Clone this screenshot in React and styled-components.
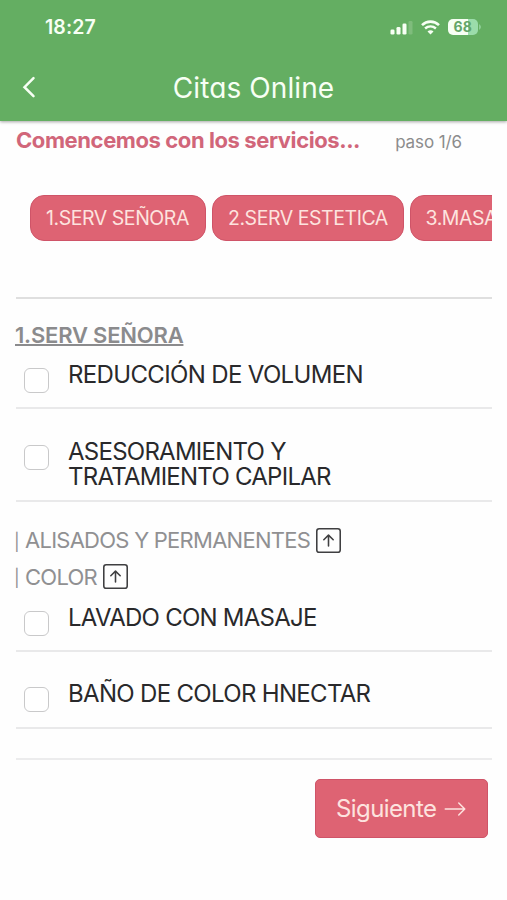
import React from "react";
import styled, { createGlobalStyle } from "styled-components";
import { BsArrowRight, BsArrowUpSquare } from "react-icons/bs";

const GlobalStyle = createGlobalStyle`
  * {
    box-sizing: border-box;
  }
  body {
    margin: 0;
    background: #fefefe;
    font-family: Inter, "Liberation Sans", sans-serif;
  }
`;

const Screen = styled.div`
  width: 507px;
  height: 900px;
  overflow: hidden;
  background: #fefefe;
`;
const Header = styled.header`
  height: 121px;
  background: #64ae62;
  box-shadow: 0 1px 3px rgba(0, 0, 0, 0.35);
  color: #f7fff4;
`;
const StatusBar = styled.div`
  display: flex;
  align-items: center;
  justify-content: space-between;
  height: 54px;
  padding: 0 25px 0 45px;
`;
const Clock = styled.span`
  font-size: 19.5px;
  font-weight: 600;
  line-height: 24px;
  letter-spacing: 0.1px;
`;
const StatusIcons = styled.div`
  display: flex;
  align-items: center;
  gap: 8px;
`;
const NavBar = styled.div`
  display: grid;
  grid-template-columns: 58px 1fr 58px;
  align-items: center;
  height: 67px;
`;
const BackButton = styled.button`
  display: flex;
  padding: 0 0 2px 22px;
  border: 0;
  background: none;
  color: inherit;
`;
const Title = styled.h1`
  margin: 0;
  font-size: 28px;
  font-weight: 400;
  line-height: 32px;
  text-align: center;
  letter-spacing: 0.1px;
  font-feature-settings: "cv11";
`;
const Content = styled.main`
  padding: 6px 15px 0 16px;
`;
const StepRow = styled.div`
  display: flex;
  align-items: center;
  justify-content: space-between;
  height: 28px;
  padding-right: 30px;
`;
const StepTitle = styled.h2`
  margin: 0 0 2px;
  color: #d1667a;
  font-size: 22px;
  font-weight: 700;
  line-height: 28px;
  white-space: nowrap;
  letter-spacing: -0.41px;
`;
const StepCount = styled.span`
  padding-top: 2px;
  color: #8c8c8c;
  font-size: 17px;
  white-space: nowrap;
  letter-spacing: -0.1px;
`;
const Categories = styled.nav`
  display: flex;
  gap: 6px;
  height: 104px;
  margin-top: 40px;
  padding-left: 14px;
  overflow: hidden;
  border-bottom: 2px solid #dfdfdf;
`;
const Category = styled.button`
  flex: 0 0 ${({ $width }) => $width}px;
  height: 46px;
  padding: 0 0 0 15px;
  border: 1px solid #cf5468;
  border-radius: 14px;
  background: #de6373;
  color: #fde3df;
  font-family: inherit;
  font-size: 19.5px;
  text-align: left;
  white-space: nowrap;
  letter-spacing: -0.45px;
`;
const SectionTitle = styled.h3`
  height: 28px;
  margin: 22px 0 0 -1px;
  color: #8b8b8d;
  font-size: 22px;
  font-weight: 600;
  line-height: 28px;
  letter-spacing: -0.2px;
  text-decoration: underline;
  text-decoration-thickness: 2px;
  text-underline-offset: 1px;
  text-decoration-skip-ink: none;
`;
const Service = styled.label`
  display: flex;
  align-items: flex-start;
  gap: 19px;
  height: ${({ $height }) => $height}px;
  padding: ${({ $top }) => $top}px 0 0 8px;
  border-bottom: 2px solid #e9e9ea;
`;
const Checkbox = styled.input`
  flex: none;
  appearance: none;
  width: 25px;
  height: 25px;
  margin: 5px 0 0;
  border: 1.5px solid #c9c9ca;
  border-radius: 6px;
  background: #fff;
`;
const ServiceName = styled.span`
  color: #29292b;
  font-size: 24px;
  line-height: 24.5px;
  white-space: pre-line;
  letter-spacing: ${({ $spacing }) => $spacing || "-0.75px"};
`;
const Groups = styled.div`
  padding-top: 20px;
`;
const Group = styled.div`
  display: flex;
  align-items: center;
  height: 36.5px;
  color: #909092;
  font-size: 22px;
  white-space: nowrap;
  letter-spacing: -0.74px;

  svg {
    margin-left: 6px;
    color: #3f3f41;
  }
`;
const Bar = styled.span`
  width: 9px;
  margin: 3px 2px 0 -2px;
  font-size: 17px;
`;
const Footer = styled.footer`
  display: flex;
  justify-content: flex-end;
  margin-top: 29px;
  padding: 19px 4px 0 0;
  border-top: 2px solid #ececed;
`;
const NextButton = styled.button`
  display: flex;
  align-items: center;
  gap: 7px;
  width: 173px;
  height: 59px;
  padding: 0 0 0 20px;
  border: 1px solid #cf5468;
  border-radius: 5px;
  background: #de6373;
  color: #fde3df;
  font-family: inherit;
  font-size: 24px;
  letter-spacing: -0.6px;
`;

const Signal = () => (
  <svg width="23" height="16" viewBox="0 0 23 16" fill="currentColor">
    <rect x="0.5" y="10.5" width="4" height="5" rx="1.3" />
    <rect x="6.5" y="8" width="4" height="7.5" rx="1.3" />
    <rect x="12.5" y="4.5" width="4" height="11" rx="1.3" />
    <rect x="18.5" y="2" width="4" height="13.5" rx="1.3" opacity="0.18" />
  </svg>
);

const Wifi = () => (
  <svg width="19" height="15" viewBox="0 0 19 15" fill="none" stroke="currentColor">
    <path d="M1 5.1C5.8.5 13.2.5 18 5.1" strokeWidth="2.6" />
    <path d="M4.1 8.5C7.2 5.6 11.8 5.6 14.9 8.5" strokeWidth="2.4" />
    <path d="M9.5 14.5 6.5 11.5C8.2 9.9 10.8 9.9 12.5 11.5Z" fill="currentColor" stroke="none" />
  </svg>
);

const Battery = () => (
  <svg width="34" height="18" viewBox="0 0 34 18">
    <path d="M5 1H20V17H5A5 5 0 0 1 0 12V6A5 5 0 0 1 5 1Z" fill="#f7fff4" />
    <path d="M20 1H25A5 5 0 0 1 30 6V12A5 5 0 0 1 25 17H20Z" fill="#9bdcaa" />
    <path d="M31 6Q35 9 31 12Z" fill="#8fce97" />
    <text x="14.7" y="14" textAnchor="middle" fontSize="14" fontWeight="700" fill="#64a568">
      68
    </text>
  </svg>
);

const App = () => {
  return (
    <Screen>
      <GlobalStyle />
      <Header>
        <StatusBar>
          <Clock>18:27</Clock>
          <StatusIcons>
            <Signal />
            <Wifi />
            <Battery />
          </StatusIcons>
        </StatusBar>
        <NavBar>
          <BackButton aria-label="Volver">
            <svg width="14" height="22" viewBox="0 0 14 22" fill="none">
              <path
                d="M11.5 2.2 2.5 11.2 11.5 20.2"
                stroke="currentColor"
                strokeWidth="2.5"
                strokeLinecap="round"
              />
            </svg>
          </BackButton>
          <Title>Citas Online</Title>
        </NavBar>
      </Header>
      <Content>
        <StepRow>
          <StepTitle>Comencemos con los servicios...</StepTitle>
          <StepCount>paso 1/6</StepCount>
        </StepRow>
        <Categories>
          <Category $width={176}>1.SERV SEÑORA</Category>
          <Category $width={191.5}>2.SERV ESTETICA</Category>
          <Category $width={176}>3.MASAJES</Category>
        </Categories>
        <SectionTitle>1.SERV SEÑORA</SectionTitle>
        <Service $top={14} $height={60}>
          <Checkbox type="checkbox" />
          <ServiceName $spacing="-0.65px">REDUCCIÓN DE VOLUMEN</ServiceName>
        </Service>
        <Service $top={31} $height={93}>
          <Checkbox type="checkbox" />
          <ServiceName>{"ASESORAMIENTO Y\nTRATAMIENTO CAPILAR"}</ServiceName>
        </Service>
        <Groups>
          <Group>
            <Bar>|</Bar>
            ALISADOS Y PERMANENTES
            <BsArrowUpSquare size={25} />
          </Group>
          <Group>
            <Bar>|</Bar>
            COLOR
            <BsArrowUpSquare size={25} />
          </Group>
        </Groups>
        <Service $top={11} $height={57}>
          <Checkbox type="checkbox" />
          <ServiceName>LAVADO CON MASAJE</ServiceName>
        </Service>
        <Service $top={30} $height={77}>
          <Checkbox type="checkbox" />
          <ServiceName $spacing="-0.68px">BAÑO DE COLOR HNECTAR</ServiceName>
        </Service>
        <Footer>
          <NextButton>
            Siguiente
            <BsArrowRight size={24} />
          </NextButton>
        </Footer>
      </Content>
    </Screen>
  );
};

export default App;
